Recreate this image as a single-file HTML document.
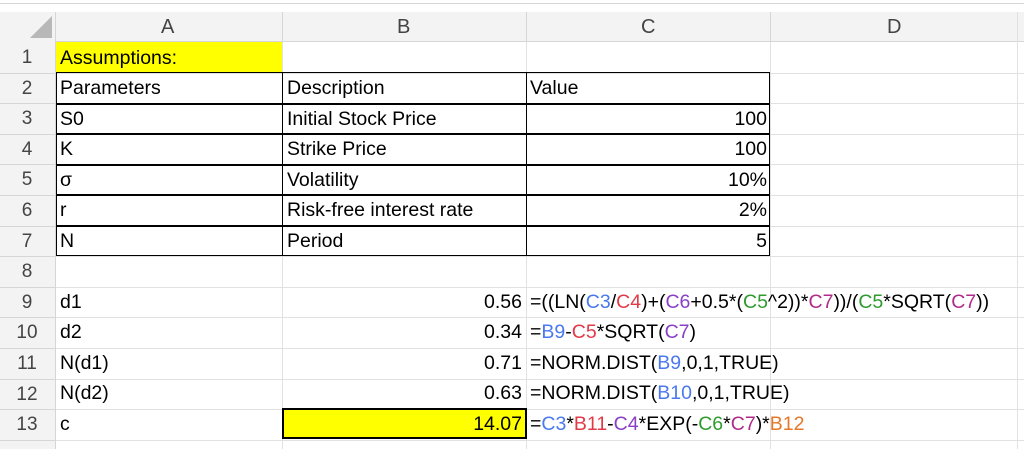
<!DOCTYPE html>
<html><head><style>
html,body{margin:0;width:1024px;height:449px;overflow:hidden}
body{background:#fff;font-family:"Liberation Sans",sans-serif;position:relative}
.a{position:absolute}
.t{position:absolute;font-size:19.5px;color:#000;white-space:nowrap;line-height:30px}
.hl{position:absolute;height:1px;background:#e1e1e1}
.vl{position:absolute;width:1px;background:#e1e1e1}
.b{color:#4a78ee}.r{color:#e03a48}.p{color:#8a3fc6}.g{color:#2f9b2f}.m{color:#b02a88}.o{color:#e5782a}
</style></head><body>
<div class="a" style="left:0;top:0;width:1024px;height:3px;background:#fff;border-bottom:1px solid #d6d6d6"></div>
<div class="a" style="left:0;top:12px;width:1024px;height:29px;background:#f3f3f3;border-bottom:1px solid #d6d6d6"></div>
<div class="a" style="left:0;top:12px;width:55px;height:437px;background:#f3f3f3;border-right:1px solid #d6d6d6"></div>
<svg class="a" style="left:28px;top:14px" width="26" height="25"><polygon points="24,2 24,24 2,24" fill="#b8b8b8"/></svg>
<div class="t" style="left:161px;top:12px;color:#444;font-size:20px">A</div>
<div class="t" style="left:397px;top:12px;color:#444;font-size:20px">B</div>
<div class="t" style="left:641px;top:12px;color:#444;font-size:20px">C</div>
<div class="t" style="left:887px;top:12px;color:#444;font-size:20px">D</div>
<div class="vl" style="left:282px;top:12px;height:29px;background:#d6d6d6"></div>
<div class="vl" style="left:526px;top:12px;height:29px;background:#d6d6d6"></div>
<div class="vl" style="left:770px;top:12px;height:29px;background:#d6d6d6"></div>
<div class="vl" style="left:1017px;top:12px;height:437px"></div>
<div class="vl" style="left:282px;top:42px;height:407px"></div>
<div class="vl" style="left:526px;top:42px;height:407px"></div>
<div class="vl" style="left:770px;top:42px;height:407px"></div>
<div id="rows"></div>
<script>
var h='';for(var i=0;i<13;i++){var y=42+i*30.6;h+='<div class="hl" style="left:56px;top:'+(y+30.6).toFixed(0)+'px;width:968px"></div><div class="hl" style="left:0;top:'+(y+30.6).toFixed(0)+'px;width:55px;background:#d6d6d6"></div>';h+='<div class="t" style="left:0;width:54px;text-align:center;top:'+(y+1).toFixed(0)+'px;color:#444;font-size:19px">'+(i+1)+'</div>';}
document.getElementById('rows').innerHTML=h;
</script>
<div class="a" style="left:56px;top:42px;width:226px;height:30px;background:#ffff00"></div>
<div class="a" style="left:56px;top:72px;width:714px;height:184px;border:1.5px solid #000;box-sizing:border-box"></div>
<div class="a" style="left:282px;top:72px;width:245px;height:184px;border-left:1.5px solid #000;border-right:1.5px solid #000;box-sizing:border-box"></div>
<div class="a" style="left:56px;top:103px;width:714px;height:1.5px;background:#000"></div>
<div class="a" style="left:56px;top:133px;width:714px;height:1.5px;background:#000"></div>
<div class="a" style="left:56px;top:164px;width:714px;height:1.5px;background:#000"></div>
<div class="a" style="left:56px;top:194px;width:714px;height:1.5px;background:#000"></div>
<div class="a" style="left:56px;top:225px;width:714px;height:1.5px;background:#000"></div>
<div class="a" style="left:282px;top:408px;width:245px;height:31px;background:#ffff00;border:2px solid #000;box-sizing:border-box"></div>
<div class="t" style="left:60px;top:43px">Assumptions:</div>
<div class="t" style="left:60px;top:73px">Parameters</div>
<div class="t" style="left:287px;top:73px">Description</div>
<div class="t" style="left:530px;top:73px">Value</div>
<div class="t" style="left:60px;top:104px">S0</div><div class="t" style="left:287px;top:104px">Initial Stock Price</div><div class="t" style="right:257px;top:104px">100</div>
<div class="t" style="left:60px;top:134px">K</div><div class="t" style="left:287px;top:134px">Strike Price</div><div class="t" style="right:257px;top:134px">100</div>
<div class="t" style="left:60px;top:165px">σ</div><div class="t" style="left:287px;top:165px">Volatility</div><div class="t" style="right:257px;top:165px">10%</div>
<div class="t" style="left:60px;top:195px">r</div><div class="t" style="left:287px;top:195px">Risk-free interest rate</div><div class="t" style="right:257px;top:195px">2%</div>
<div class="t" style="left:60px;top:226px">N</div><div class="t" style="left:287px;top:226px">Period</div><div class="t" style="right:257px;top:226px">5</div>
<div class="t" style="left:60px;top:287px">d1</div><div class="t" style="right:502px;top:287px">0.56</div>
<div class="t" style="left:530px;top:287px">=((LN(<span class="b">C3</span>/<span class="r">C4</span>)+(<span class="p">C6</span>+0.5*(<span class="g">C5</span>^2))*<span class="m">C7</span>))/(<span class="g">C5</span>*SQRT(<span class="m">C7</span>))</div>
<div class="t" style="left:60px;top:317px">d2</div><div class="t" style="right:502px;top:317px">0.34</div>
<div class="t" style="left:530px;top:317px">=<span class="b">B9</span>-<span class="r">C5</span>*SQRT(<span class="p">C7</span>)</div>
<div class="t" style="left:60px;top:348px">N(d1)</div><div class="t" style="right:502px;top:348px">0.71</div>
<div class="t" style="left:530px;top:348px">=NORM.DIST(<span class="b">B9</span>,0,1,TRUE)</div>
<div class="t" style="left:60px;top:378px">N(d2)</div><div class="t" style="right:502px;top:378px">0.63</div>
<div class="t" style="left:530px;top:378px">=NORM.DIST(<span class="b">B10</span>,0,1,TRUE)</div>
<div class="t" style="left:60px;top:409px">c</div><div class="t" style="right:502px;top:409px">14.07</div>
<div class="t" style="left:530px;top:409px">=<span class="b">C3</span>*<span class="r">B11</span>-<span class="p">C4</span>*EXP(-<span class="g">C6</span>*<span class="m">C7</span>)*<span class="o">B12</span></div>
</body></html>
